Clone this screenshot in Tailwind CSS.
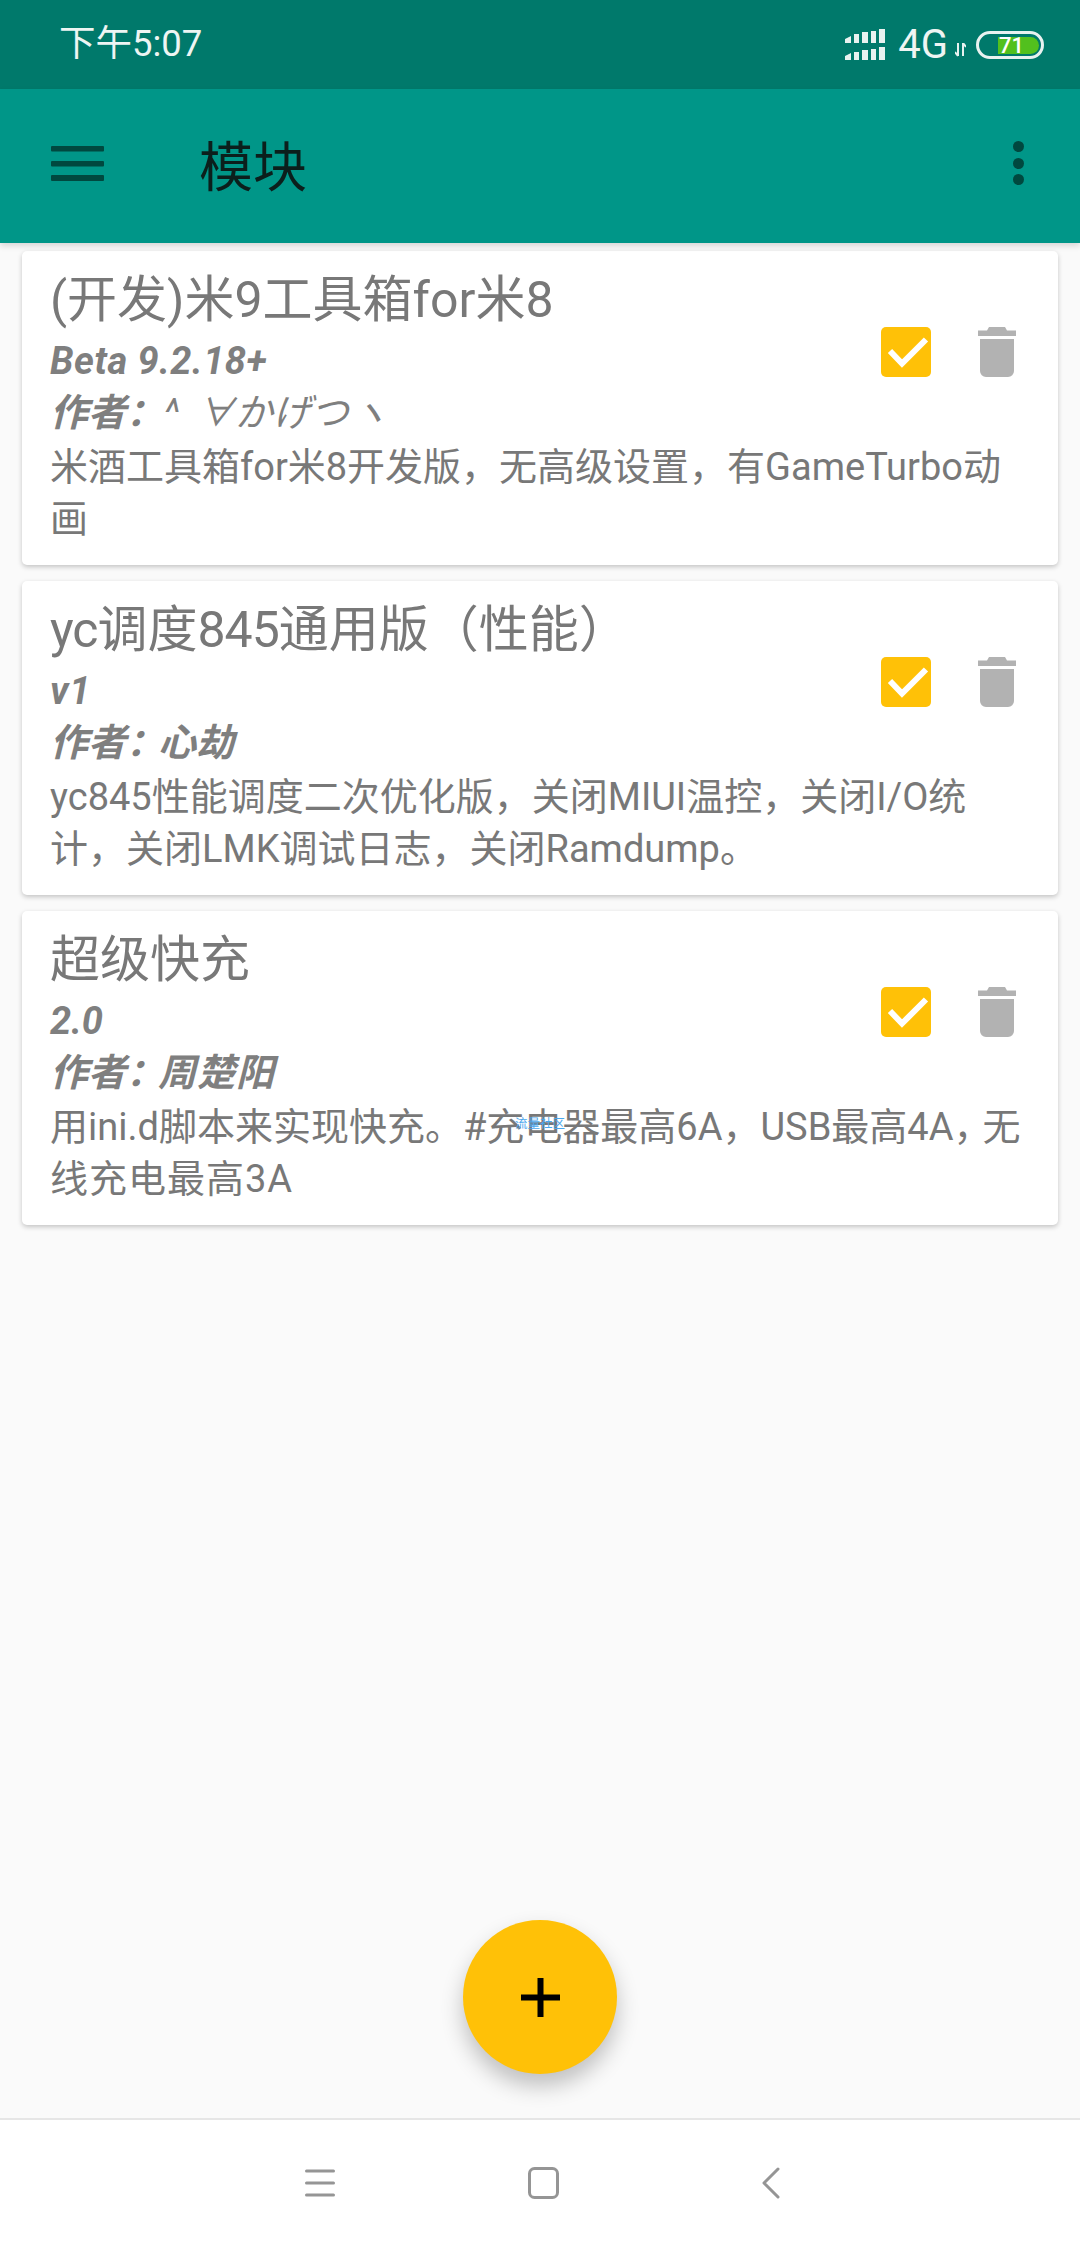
<!DOCTYPE html>
<html lang="zh">
<head>
<meta charset="utf-8">
<script src="https://cdn.jsdelivr.net/npm/@tailwindcss/browser@4"></script>
</head>
<body class="m-0">
<div class="relative w-[1080px] h-[2248px] overflow-hidden bg-[#fafafa] flex flex-col font-['Roboto','Noto_Sans_CJK_SC',sans-serif]">
  <!-- status bar -->
  <div class="h-[89px] shrink-0 bg-[#00796b] flex items-center pl-[59px] pr-[36px] text-[#eef5f3]">
    <span class="text-[36.500px] leading-none">下午5:07</span>
    <div class="ml-auto flex items-center">
      <svg width="40" height="31" viewBox="0 0 40 31" fill="#e8f2f0"><path d="M0 10l6-3v7H0zM9 5h5v9H9zM17 3h6v11h-6zM26 2h5v12h-5zM34 0h6v14h-6zM0 27l6-3v7H0zM9 23h5v8H9zM17 21h6v10h-6zM26 20h5v11h-5zM34 18h6v13h-6z"/></svg>
      <span class="ml-[13px] text-[40px] leading-none">4G</span>
      <svg class="ml-[7px] mt-[10px]" width="11" height="14" viewBox="0 0 11 14" fill="none" stroke="#e8f2f0" stroke-width="2"><path d="M3 0v13M0 9l3 4M8 13V0M8 0l3 4"/></svg>
      <div class="ml-[10px] w-[68px] h-[28px] rounded-full border-[3px] border-[#e8f2f0] relative">
        <div class="absolute left-[19px] top-[3px] w-[41px] h-[17px] rounded-r-full bg-[#52c01e] text-white text-[22px] leading-[17px] font-medium pl-[1px]">71</div>
      </div>
    </div>
  </div>
  <!-- app bar -->
  <div class="relative z-10 h-[154px] shrink-0 bg-[#009688] flex items-center shadow-[0_3px_6px_rgba(0,0,0,0.14)]">
    <svg class="ml-[51px] mt-[-6px]" width="53" height="35" viewBox="0 0 53 35" fill="#00483f"><rect width="53" height="5.5" rx="1"/><rect y="15" width="53" height="5.5" rx="1"/><rect y="29" width="53" height="6" rx="1"/></svg>
    <span class="ml-[95px] mt-[6px] text-[54px] leading-none text-[#0b1f1c]">模块</span>
    <svg class="ml-auto mr-[56px] mt-[-6px]" width="11" height="44" viewBox="0 0 11 44" fill="#00483f"><circle cx="5.5" cy="5.5" r="5.5"/><circle cx="5.5" cy="22.5" r="5.5"/><circle cx="5.5" cy="38.500" r="5.5"/></svg>
  </div>
  <!-- list -->
  <div class="flex flex-col gap-[16px] px-[22px] pt-[8px]">
    <div class="relative h-[314px] bg-white rounded-[5px] shadow-[0_2px_5px_rgba(0,0,0,0.22)] pl-[28px] pt-[14px] text-[#787878]">
      <div class="text-[50px] leading-[70px]">(开发)米9工具箱for米8</div>
      <div class="text-[38px] leading-[50px] font-bold italic tracking-[0.5px] text-[#7f7f7f] mt-[1px]">Beta 9.2.18+</div>
      <div class="text-[38px] leading-[54px] font-bold italic text-[#7f7f7f]">作者：<span class="font-normal">^ <span class="ml-[8px]">∀かげつ</span><span class="ml-[2px]">ヽ</span></span></div>
      <div class="text-[38px] leading-[52px] mt-[1px]">米酒工具箱for米8开发版，无高级设置，有GameTurbo动<br>画</div>
      <div class="absolute left-[859px] top-[76px] flex items-start gap-[47px]">
        <svg width="50" height="50" viewBox="0 0 50 50"><rect width="50" height="50" rx="5" fill="#ffc107"/><path d="M9 24l12 12.500 24-24" fill="none" stroke="#fff" stroke-width="6"/></svg>
        <svg width="38" height="50" viewBox="0 0 38 50" fill="#b2b2b2"><path d="M0 3.500h9L11 0h16l2 3.500h9V9H0zM2 12h34v32a6 6 0 0 1-6 6H8a6 6 0 0 1-6-6z"/></svg>
      </div>
    </div>
    <div class="relative h-[314px] bg-white rounded-[5px] shadow-[0_2px_5px_rgba(0,0,0,0.22)] pl-[28px] pt-[14px] text-[#787878]">
      <div class="text-[50px] leading-[70px]"><span class="tracking-[-1px]">yc</span>调度<span class="tracking-[-1px]">845</span>通用版（性能）</div>
      <div class="text-[38px] leading-[50px] font-bold italic tracking-[0.5px] text-[#7f7f7f] mt-[1px]">v1</div>
      <div class="text-[38px] leading-[54px] font-bold italic text-[#7f7f7f]">作者<span class="tracking-[-6px]">：</span>心劫</div>
      <div class="text-[38px] leading-[52px] mt-[1px]">yc845性能调度二次优化版，关闭MIUI温控，关闭I/O统<br>计，关闭LMK调试日志，关闭Ramdump。</div>
      <div class="absolute left-[859px] top-[76px] flex items-start gap-[47px]">
        <svg width="50" height="50" viewBox="0 0 50 50"><rect width="50" height="50" rx="5" fill="#ffc107"/><path d="M9 24l12 12.500 24-24" fill="none" stroke="#fff" stroke-width="6"/></svg>
        <svg width="38" height="50" viewBox="0 0 38 50" fill="#b2b2b2"><path d="M0 3.500h9L11 0h16l2 3.500h9V9H0zM2 12h34v32a6 6 0 0 1-6 6H8a6 6 0 0 1-6-6z"/></svg>
      </div>
    </div>
    <div class="relative h-[314px] bg-white rounded-[5px] shadow-[0_2px_5px_rgba(0,0,0,0.22)] pl-[28px] pt-[14px] text-[#787878]">
      <div class="text-[50px] leading-[70px]">超级快充</div>
      <div class="text-[38px] leading-[50px] font-bold italic text-[#7f7f7f] mt-[1px]">2.0</div>
      <div class="text-[38px] leading-[54px] font-bold italic text-[#7f7f7f]">作者<span class="tracking-[-6px]">：</span><span class="tracking-[1px]">周楚阳</span></div>
      <div class="text-[38px] leading-[52px] mt-[1px]">用ini.d脚本来实现快充。#充电器最高6A，USB最高4A<span class="tracking-[-9px]">，</span>无<br><span class="tracking-[1px]">线充电最高3A</span></div>
      <div class="absolute left-[859px] top-[76px] flex items-start gap-[47px]">
        <svg width="50" height="50" viewBox="0 0 50 50"><rect width="50" height="50" rx="5" fill="#ffc107"/><path d="M9 24l12 12.500 24-24" fill="none" stroke="#fff" stroke-width="6"/></svg>
        <svg width="38" height="50" viewBox="0 0 38 50" fill="#b2b2b2"><path d="M0 3.500h9L11 0h16l2 3.500h9V9H0zM2 12h34v32a6 6 0 0 1-6 6H8a6 6 0 0 1-6-6z"/></svg>
      </div>
      <div class="absolute left-[493px] top-[207px] text-[12.5px] leading-none text-[#4aa8ee]">流量社区</div>
    </div>
  </div>
  <!-- fab -->
  <div class="absolute left-[463px] top-[1920px] w-[154px] h-[154px] rounded-full bg-[#ffc107] flex items-center justify-center shadow-[0_12px_22px_rgba(0,0,0,0.24)]">
    <svg width="39" height="39" viewBox="0 0 39 39" fill="#000"><path d="M16.500 0h6v16.500H39v6H22.500V39h-6V22.500H0v-6h16.500z"/></svg>
  </div>
  <!-- nav bar -->
  <div class="mt-auto h-[130px] shrink-0 bg-white border-t-2 border-[#e6e6e6] flex items-center pl-[305px]">
    <svg class="mt-[-2px]" width="30" height="28" viewBox="0 0 30 28" fill="none" stroke="#959595" stroke-width="3" stroke-linecap="round"><path d="M1.500 2h27M1.500 14h27M1.500 26h27"/></svg>
    <svg class="ml-[193px] mt-[-2px]" width="31" height="32" viewBox="0 0 31 32" fill="none" stroke="#959595" stroke-width="3"><rect x="1.500" y="1.500" width="28" height="29" rx="5"/></svg>
    <svg class="ml-[203px] mt-[-2px]" width="18" height="32" viewBox="0 0 18 32" fill="none" stroke="#959595" stroke-width="3" stroke-linecap="round" stroke-linejoin="round"><path d="M16 2L2 16l14 14"/></svg>
  </div>
</div>
</body>
</html>
